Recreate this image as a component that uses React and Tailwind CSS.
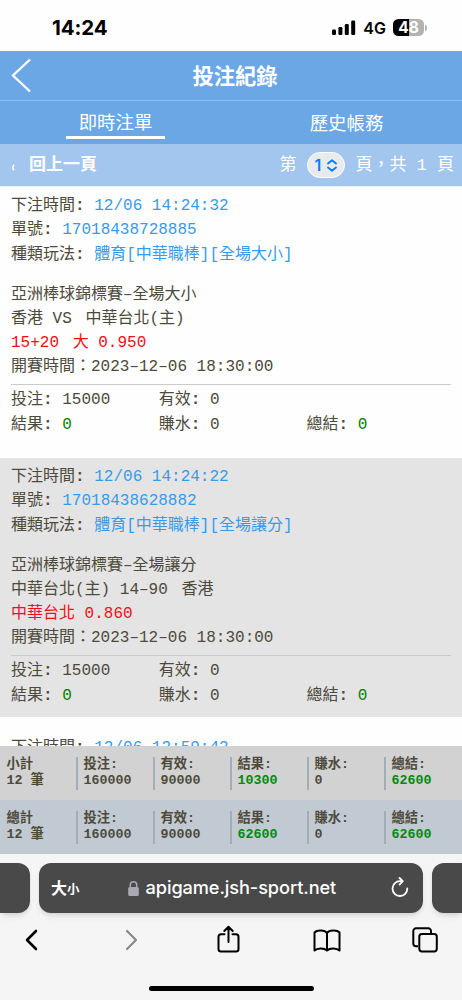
import React from "react";

const bets = [
  {
    time: "12/06 14:24:32",
    no: "17018438728885",
    type: "體育[中華職棒][全場大小]",
    league: "亞洲棒球錦標賽–全場大小",
    home: "香港 VS",
    away: "中華台北(主)",
    pick: ["15+20", "大 0.950"],
  },
  {
    time: "12/06 14:24:22",
    no: "17018438628882",
    type: "體育[中華職棒][全場讓分]",
    league: "亞洲棒球錦標賽–全場讓分",
    home: "中華台北(主) 14–90",
    away: "香港",
    pick: ["中華台北 0.860"],
    dark: true,
  },
];

const StatusBar = () => (
  <div className="flex h-[51px] shrink-0 items-start justify-between bg-[#fefefe] pl-[52px] pr-[35px] pt-[14px] font-['Inter',sans-serif] text-black">
    <span className="text-[20.5px] font-bold leading-[27px] tracking-[-0.1px]">
      14:24
    </span>
    <div className="flex h-[27px] items-center">
      <svg width="25" height="16" viewBox="0 0 25 16" fill="#000">
        <rect x="1" y="9.5" width="4" height="5.5" rx="1.3" />
        <rect x="7.4" y="7" width="4" height="8" rx="1.3" />
        <rect x="13.8" y="4" width="4" height="11" rx="1.3" />
        <rect x="20.2" y="0.5" width="4" height="14.5" rx="1.3" />
      </svg>
      <span className="ml-[7px] text-[16px] font-semibold leading-none">4G</span>
      <div className="ml-[7px] flex h-[17px] w-[31px] items-center justify-center rounded-[5.5px] bg-linear-to-r from-black from-50% to-[#b3b3b3] to-50% text-[15.5px] font-bold leading-none text-white">
        48
      </div>
      <div className="ml-px h-[6px] w-[2px] rounded-r-full bg-[#b3b3b3]" />
    </div>
  </div>
);

const TitleBar = () => (
  <div className="grid h-[50px] shrink-0 grid-cols-[68px_1fr_60px] items-center border-b border-[#8dbcee] bg-[#6aa7e4] font-['Inter','Noto_Sans_CJK_TC',sans-serif] text-white">
    <svg className="ml-[11px]" width="22" height="35" viewBox="0 0 22 35" fill="none" stroke="#fff" strokeWidth="2.4">
      <path d="M19 1.5 2 17.5 19 33.5" />
    </svg>
    <h1 className="pt-[2px] text-center text-[21.3px] font-bold leading-none">投注紀錄</h1>
  </div>
);

const Tabs = () => (
  <div className="grid h-[43px] shrink-0 grid-cols-2 bg-[#6aa7e4] pt-[6px] font-['Noto_Sans_CJK_TC',sans-serif] text-[18.4px] leading-[29px] text-white">
    <div className="flex justify-center">
      <span className="h-[32px] w-[99px] border-b-[3px] border-white text-center">
        即時注單
      </span>
    </div>
    <span className="pt-px text-center">歷史帳務</span>
  </div>
);

const Pager = () => (
  <div className="flex h-[42px] shrink-0 items-center bg-[#a3c6ef] pl-[11px] pr-[8px] font-['Liberation_Mono','Noto_Sans_CJK_TC',monospace] text-[17px] leading-none text-white">
    <svg className="mt-[4px]" width="4" height="7" viewBox="0 0 4 7" fill="none" stroke="#fff" strokeWidth="1.5">
      <path d="M3.2 0.7Q0.3 3.5 3.2 6.3" />
    </svg>
    <span className="ml-[14px] font-bold">回上一頁</span>
    <span className="ml-auto">第</span>
    <span className="mx-[10.5px] flex h-[26px] w-[38px] items-center justify-center gap-[6px] rounded-full border border-white bg-[#e9eaec] font-['Inter',sans-serif] text-[16px] font-semibold text-[#0a7aff]">
      1
      <svg width="10" height="13" viewBox="0 0 10 13" fill="none" stroke="#0a7aff" strokeWidth="1.8" strokeLinecap="round" strokeLinejoin="round">
        <path d="M1 4.5 5 1.2 9 4.5M1 8.5 5 11.8 9 8.5" />
      </svg>
    </span>
    <span className="whitespace-pre">{"頁\uff0c共 1 頁"}</span>
  </div>
);

const Label = ({ children }) => (
  <>
    {children}
    <b>:</b>{" "}
  </>
);

const Amount = ({ label, value, green }) => (
  <span className="w-[147.8px] shrink-0">
    <Label>{label}</Label>
    <span className={green ? "text-[#008000]" : ""}>{value}</span>
  </span>
);

const Bet = ({ bet }) => (
  <div
    className={`h-[258.5px] shrink-0 whitespace-nowrap px-[11px] pt-[7px] font-['Liberation_Mono','Noto_Sans_CJK_TC',monospace] text-[16px] text-[#4d4a3b] ${
      bet.dark ? "bg-[#e4e4e4]" : "bg-[#fefefe]"
    }`}
  >
    <div className="leading-[24.4px]">
      <p className="h-[24.4px]">
        <Label>下注時間</Label>
        <span className="text-[#389bea]">{bet.time}</span>
      </p>
      <p className="h-[24.4px]">
        <Label>單號</Label>
        <span className="text-[#389bea]">{bet.no}</span>
      </p>
      <p className="h-[24.4px]">
        <Label>種類玩法</Label>
        <span className="text-[#389bea]">{bet.type}</span>
      </p>
    </div>
    <div className="mt-[16px] border-b border-[#cbcbcb] pb-[5px] leading-[24px]">
      <p className="h-[24px]">{bet.league}</p>
      <p className="h-[24px]">
        {bet.home} <span className="ml-[4px]">{bet.away}</span>
      </p>
      <p className="h-[24px] text-[#f40d18]">
        {bet.pick[0]} {bet.pick[1] && <span className="ml-[4px]">{bet.pick[1]}</span>}
      </p>
      <p className="h-[24px]">{"開賽時間\uff1a2023–12–06 18:30:00"}</p>
    </div>
    <div className="mt-[3px] leading-[24.5px]">
      <div className="flex h-[24.5px]">
        <Amount label="投注" value="15000" />
        <Amount label="有效" value="0" />
      </div>
      <div className="flex h-[24.5px]">
        <Amount label="結果" value="0" green />
        <Amount label="賺水" value="0" />
        <Amount label="總結" value="0" green />
      </div>
    </div>
  </div>
);

const Summary = ({ title, result, className }) => {
  const cells = [
    ["投注:", "160000"],
    ["有效:", "90000"],
    ["結果:", result, true],
    ["賺水:", "0"],
    ["總結:", "62600", true],
  ];
  return (
    <div
      className={`grid h-[54px] shrink-0 grid-cols-6 items-center font-['Liberation_Mono','Noto_Sans_CJK_TC',monospace] text-[13.3px] font-bold leading-[16.5px] text-[#4d4a3b] ${className}`}
    >
      <div className="pl-[6.5px]">
        <p className="h-[16.5px]">{title}</p>
        <p className="h-[16.5px]">12 筆</p>
      </div>
      {cells.map(([label, value, green]) => (
        <div key={label} className="-ml-px border-l-2 border-[#a3adb8] pl-[5.5px]">
          <p className="h-[16.5px]">{label}</p>
          <p className={`h-[16.5px] ${green ? "text-[#008a0c]" : ""}`}>{value}</p>
        </div>
      ))}
    </div>
  );
};

const AddressBar = () => (
  <div className="flex h-[50px] gap-[9px]">
    <div className="w-[30px] rounded-r-[12px] bg-[#494949] shadow-md" />
    <div className="flex w-[384px] items-center rounded-[12px] bg-[#494949] pl-[12px] pr-[14px] font-['Inter','Noto_Sans_CJK_TC',sans-serif] text-white shadow-md">
      <span className="flex items-baseline font-bold leading-none">
        <span className="text-[16px]">大</span>
        <span className="text-[12.5px]">小</span>
      </span>
      <svg className="ml-[48px]" width="11" height="15" viewBox="0 0 11 15">
        <rect x="0.2" y="6" width="10.6" height="9" rx="1.5" fill="#aaa8b0" />
        <path d="M2.3 7V4a3.2 3.2 0 0 1 6.4 0v3" fill="none" stroke="#aaa8b0" strokeWidth="1.5" />
      </svg>
      <span className="ml-[7px] text-[18.2px] font-medium tracking-[-0.1px]">
        apigame.jsh-sport.net
      </span>
      <svg className="-mt-[3px] ml-auto" width="18" height="20" viewBox="0 0 18 20" fill="none" stroke="#fff" strokeWidth="1.8" strokeLinecap="round" strokeLinejoin="round">
        <path d="M16.3 11.5A7.4 7.4 0 1 1 9 4.2h2.5M8.500 1 11.800 4.200 8.500 7.600" />
      </svg>
    </div>
    <div className="w-[30px] rounded-l-[12px] bg-[#494949] shadow-md" />
  </div>
);

const Toolbar = () => (
  <div className="mt-[11px] flex h-[32px] items-center pl-[25px]">
    <svg width="13" height="22" viewBox="0 0 13 22" fill="none" stroke="#000" strokeWidth="2.6" strokeLinecap="round" strokeLinejoin="round">
      <path d="M11 2 2 11 11 20" />
    </svg>
    <svg className="ml-[87px]" width="13" height="22" viewBox="0 0 13 22" fill="none" stroke="#898989" strokeWidth="2.2" strokeLinecap="round" strokeLinejoin="round">
      <path d="M2 2 11 11 2 20" />
    </svg>
    <svg className="-mt-[2px] ml-[79px]" width="23" height="28" viewBox="0 0 23 28" fill="none" stroke="#000" strokeWidth="2" strokeLinecap="round" strokeLinejoin="round">
      <path d="M7.5 9.3H4a2.5 2.5 0 0 0-2.5 2.5V24A2.5 2.5 0 0 0 4 26.5h15a2.5 2.5 0 0 0 2.5-2.5V11.8A2.5 2.5 0 0 0 19 9.3h-3.5M11.5 17V2M7.3 6 11.5 1.7 15.7 6" />
    </svg>
    <svg className="ml-[73px]" width="28" height="23" viewBox="0 0 28 23" fill="none" stroke="#000" strokeWidth="2" strokeLinejoin="round">
      <path d="M14 4C12 1 4 .5 1.5 3.5V21.5C4 19 11 18.5 14 21.5 17 18.5 24 19 26.5 21.5V3.5C24 .5 16 1 14 4ZM14 4V21.5" />
    </svg>
    <svg className="ml-[71px]" width="26" height="26" viewBox="0 0 26 26" fill="none" stroke="#000" strokeWidth="2">
      <path d="M6 19.3H4A2.7 2.7 0 0 1 1.3 16.6V4A2.7 2.7 0 0 1 4 1.3H16.3A2.7 2.7 0 0 1 19 4V6" />
      <rect x="7.3" y="7" width="17.5" height="17.5" rx="2.7" />
    </svg>
  </div>
);

export default function App() {
  return (
    <div className="flex h-[1000px] w-[462px] flex-col overflow-hidden bg-[#fefefe]">
      <StatusBar />
      <TitleBar />
      <Tabs />
      <Pager />
      <div className="flex h-[560px] shrink-0 flex-col gap-[12.5px] overflow-hidden border-t border-[#e6f3fb]">
        {bets.map((bet) => (
          <Bet key={bet.no} bet={bet} />
        ))}
        <p className="shrink-0 px-[11px] pt-[7px] font-['Liberation_Mono','Noto_Sans_CJK_TC',monospace] text-[16px] leading-[24.4px] text-[#4d4a3b]">
          <Label>下注時間</Label>
          <span className="text-[#389bea]">12/06 12:59:42</span>
        </p>
      </div>
      <Summary title="小計" result="10300" className="bg-[#d2d2d2]" />
      <Summary title="總計" result="62600" className="bg-[#c1cad2]" />
      <div className="flex-1 bg-[#f5f5f5] pt-[9px]">
        <AddressBar />
        <Toolbar />
        <div className="mx-auto mt-[30px] h-[5px] w-[165px] rounded-full bg-black" />
      </div>
    </div>
  );
}
